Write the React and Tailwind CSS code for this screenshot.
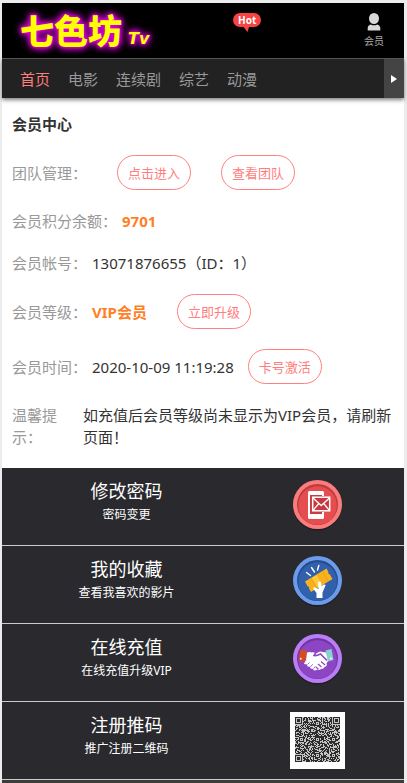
import { useState } from 'react'

const NAV = ['首页', '电影', '连续剧', '综艺', '动漫']

function Pill({ children, className = '' }) {
  return (
    <button type="button" className={`h-[35px] px-[10px] rounded-full border border-[#ff8080] text-[#ff7d7d] text-[13px] leading-5 whitespace-nowrap ${className}`}>
      {children}
    </button>
  )
}

function Row({ label, children }) {
  return (
    <div className="flex items-center mb-5">
      <dt className="text-[#999] shrink-0">{label}</dt>
      <dd className="flex items-center pl-[5px]">{children}</dd>
    </div>
  )
}

function Disc({ rim, fill, shade, cy, children }) {
  return (
    <svg viewBox="0 0 55 57" className="w-[55px] h-[57px]" aria-hidden="true">
      <circle cx="27.5" cy={cy + 1.5} r="24.5" fill="#000" opacity="0.25" />
      <circle cx="27.5" cy={cy} r="24.5" fill={rim} />
      <circle cx="27.5" cy={cy} r="20.5" fill={shade} />
      <circle cx="27.5" cy={cy + 1} r="19.3" fill={fill} />
      {children}
    </svg>
  )
}

function PasswordIcon() {
  return (
    <Disc rim="#fb7c7c" fill="#e54d4f" shade="#b83c40" cy={26.5}>
      <path d="M20 14h14v25H20z" fill="#a92f35" opacity="0.5" />
      <path d="M19.500 13h13a1.500 1.500 0 0 1 1.500 1.500V18h-2v-1H20v19h12v-2h2v5.500a1.500 1.500 0 0 1-1.500 1.500h-13a1.500 1.500 0 0 1-1.500-1.500v-25a1.500 1.500 0 0 1 1.500-1.500z" fill="#fff" />
      <rect x="22.700" y="19.200" width="17" height="13.600" fill="#c8393f" stroke="#fff" strokeWidth="1.500" />
      <path d="M23 20l8.200 7.500L39.500 20M23 32.500l5.800-7M39.500 32.500l-5.800-7" fill="none" stroke="#fff" strokeWidth="1.300" />
    </Disc>
  )
}

function TicketIcon() {
  return (
    <Disc rim="#6b9bea" fill="#3160ad" shade="#274c8c" cy={24.5}>
      <path d="M16.500 16.500l4 3M21.500 11.500l3 4.500M28.800 9.500l-1.300 4.500" stroke="#fff" strokeWidth="1.400" strokeLinecap="round" />
      <path d="M15 25.500l21.500-13 2 3.500-.5 1.500 1.500.5 3 5-21.500 13-2-3.500.3-1.600-1.600-.5z" fill="#f8b31c" />
      <path d="M22 22l4.500-2.700 5.500 9.500-4.500 2.700z" fill="#ffc93c" />
      <path d="M21 22.500l5.500 9.500M32.500 15.500l5.500 9.500" stroke="#e39a0e" strokeWidth="0.700" />
      <path d="M28 26.500c1-1.500 3-1 3 .5l.5 3 2.500-1.500c1.500-.5 2 .8 1.200 1.800l-2.700 6.200V42h-6v-5l-3-4c-.8-1 .3-2 1.500-1.500l3.500 1.500z" fill="#fff" />
    </Disc>
  )
}

function HandshakeIcon() {
  return (
    <Disc rim="#bb7df5" fill="#8c46c4" shade="#6f35a3" cy={24.5}>
      <path d="M10.500 15.500l6.500 1-2 11.500-6.500-1.500z" fill="#d84b20" />
      <path d="M35.500 16.500l6-1.500 2 11-5.500 1.500z" fill="#83d3d0" />
      <path d="M17 18.500l6-1 4 1.500 3-1.500 6 1 2 8.500-1.500 2.500c1 2-.5 3.500-2 3.200-.3 1.800-2 2.500-3.500 2-.8 1.300-2.500 1.800-4 .8L16 26z" fill="#fff" />
      <path d="M15.500 26.500l-1.500 3.500 3 .5.500 2 2.500.3.500 1.800 2.500.3 1 1.600 3-.5 1-3-6-7z" fill="#fff" />
      <path d="M20.500 17.800c2-.6 4-.3 5.500.5l-2 3.200c2.500.5 4.500-.5 6.500-1.500l6.500 6.500" fill="none" stroke="#8c46c4" strokeWidth="1.600" />
      <path d="M28 30l3.500 3M31 27.500l4 3.500M26 33l2.500 2.500" stroke="#8c46c4" strokeWidth="1.200" />
      <path d="M17.500 30.500l2-2M20.500 32.800l2.300-2.600M23.500 34.700l2-2.400" stroke="#8c46c4" strokeWidth="0.800" />
      <circle cx="10.800" cy="24.700" r="0.900" fill="#fff" />
      <circle cx="41" cy="24.500" r="0.900" fill="#fff" />
    </Disc>
  )
}

// 45x45 modules, finder squares in three corners, alignment squares at 6/22/38
const SIZE = 45
const FINDERS = [[3, 3], [41, 3], [3, 41]]
const ALIGNS = [[22, 6], [6, 22], [22, 22], [38, 22], [22, 38], [38, 38]]

function isDark(x, y) {
  for (const [cx, cy] of FINDERS) {
    const d = Math.max(Math.abs(x - cx), Math.abs(y - cy))
    if (d <= 4) return d !== 2 && d !== 4
  }
  for (const [cx, cy] of ALIGNS) {
    const d = Math.max(Math.abs(x - cx), Math.abs(y - cy))
    if (d <= 2) return d !== 1
  }
  if (x === 6 || y === 6) return (x + y) % 2 === 0
  const n = Math.sin(x * 12.9898 + y * 78.233) * 43758.5453
  return n - Math.floor(n) > 0.46
}

let qrPath = ''
for (let y = 0; y < SIZE; y++) {
  for (let x = 0; x < SIZE; x++) {
    if (isDark(x, y)) qrPath += `M${x} ${y}h1v1h-1z`
  }
}

function QrIcon() {
  return (
    <svg viewBox="0 0 55 57" className="w-[55px] h-[57px]" aria-hidden="true">
      <rect width="55" height="57" fill="#fff" />
      <g transform="translate(5 5)">
        <rect width="45" height="45" fill="#c4c4c4" />
        <path d={qrPath} fill="#2c2c2c" />
      </g>
    </svg>
  )
}

const MENU = [
  { title: '修改密码', sub: '密码变更', icon: <PasswordIcon /> },
  { title: '我的收藏', sub: '查看我喜欢的影片', icon: <TicketIcon /> },
  { title: '在线充值', sub: '在线充值升级VIP', icon: <HandshakeIcon /> },
  { title: '注册推码', sub: '推广注册二维码', icon: <QrIcon /> },
]

export default function App() {
  const [active, setActive] = useState('首页')

  return (
    <div className="min-h-screen bg-[#ececec] pt-[3px] pl-[2px] pr-[3px] flex flex-col font-['Noto_Sans','Noto_Sans_CJK_SC',sans-serif] text-[15px] leading-[22px] text-[#333]">
      {/* Header */}
      <header className="h-[55px] bg-black flex items-start">
        <a href="#home" className="w-[57%] shrink-0 pl-[18px] pt-2 flex items-baseline text-[#ffff00] [text-shadow:0_0_2px_#d0d,0_0_4px_#d0d,0_0_6px_#c0c,0_0_8px_#b0b,0_0_10px_#a0a]">
          <span className="text-[34px] leading-[40px] font-black">七色坊</span>
          <span className="ml-[6px] text-[16px] leading-5 font-bold italic font-['DejaVu_Sans',sans-serif]">Tv</span>
        </a>
        <a href="#hot" className="relative mt-[10px] ml-[2px] w-7 h-5 text-center text-[10px] leading-[14px] font-bold text-white">
          <svg viewBox="0 0 28 20" className="absolute inset-0 w-7 h-5" aria-hidden="true">
            <path d="M7 0h14a7 7 0 0 1 0 14h-5l-1.500 5-4-5H7A7 7 0 0 1 7 0z" fill="#f84343" />
          </svg>
          <span className="relative">Hot</span>
        </a>
        <a href="#member" className="ml-auto mr-5 pt-[10px] flex flex-col items-center text-[10px] leading-[14px] text-[#aaa]">
          <svg viewBox="0 0 14 18" className="w-[14px] h-[18px] mb-[3px]" fill="#d8d8d8" aria-hidden="true">
            <ellipse cx="7" cy="5.500" rx="5" ry="5.500" />
            <path d="M.7 17.500v-2.500c0-2 1.500-3 3-3.600 2 1.200 4.600 1.200 6.600 0 1.500.6 3 1.600 3 3.600v2.500z" />
          </svg>
          会员
        </a>
      </header>

      {/* Nav */}
      <nav className="relative h-10 border-t border-[#555] bg-[#222] flex shadow-[0_2px_4px_rgba(0,0,0,0.5)]">
        <div className="flex-1 flex items-center gap-[18px] pl-[18px] overflow-hidden whitespace-nowrap">
          {NAV.map(n => (
            <a key={n} href="#nav" onClick={() => setActive(n)} className={n === active ? 'text-[#ff7d7d]' : 'text-[#999]'}>{n}</a>
          ))}
        </div>
        <button type="button" aria-label="更多" className="w-5 bg-[#444] flex items-center justify-center">
          <svg viewBox="0 0 6 8" className="w-[6px] h-2" fill="#fff" aria-hidden="true"><path d="M0 0l6 4-6 4z" /></svg>
        </button>
      </nav>

      {/* Account */}
      <main className="bg-white px-[10px] pt-[15px]">
        <h1 className="font-bold mb-5">会员中心</h1>
        <dl>
          <Row label="团队管理：">
            <Pill className="ml-[25px]">点击进入</Pill>
            <Pill className="ml-[30px]">查看团队</Pill>
          </Row>
          <Row label="会员积分余额：">
            <span className="font-bold text-[#ff7f27]">9701</span>
          </Row>
          <Row label="会员帐号：">13071876655（ID：1）</Row>
          <Row label="会员等级：">
            <span className="font-bold text-[#ff7f27]">VIP会员</span>
            <Pill className="ml-[30px]">立即升级</Pill>
          </Row>
          <Row label="会员时间：">
            2020-10-09 11:19:28
            <Pill className="ml-[14px]">卡号激活</Pill>
          </Row>
          <div className="flex pb-5">
            <dt className="w-14 mr-[15px] shrink-0 text-[#999]">温馨提示：</dt>
            <dd className="flex-1">如充值后会员等级尚未显示为VIP会员，请刷新页面！</dd>
          </div>
        </dl>
      </main>

      {/* Menu */}
      <ul className="bg-[#29292e] text-white">
        {MENU.map(m => (
          <li key={m.title}>
            <a href="#menu" className="h-[78px] pt-[10px] border-b border-[#ccc] flex items-start text-center">
              <span className="w-[62%]">
                <span className="block text-[18px] leading-[27px]">{m.title}</span>
                <span className="block text-[12px] leading-5">{m.sub}</span>
              </span>
              <span className="w-[33%] flex justify-center">{m.icon}</span>
            </a>
          </li>
        ))}
      </ul>
      <div className="flex-1 bg-[#3a3d3a]" />
    </div>
  )
}
